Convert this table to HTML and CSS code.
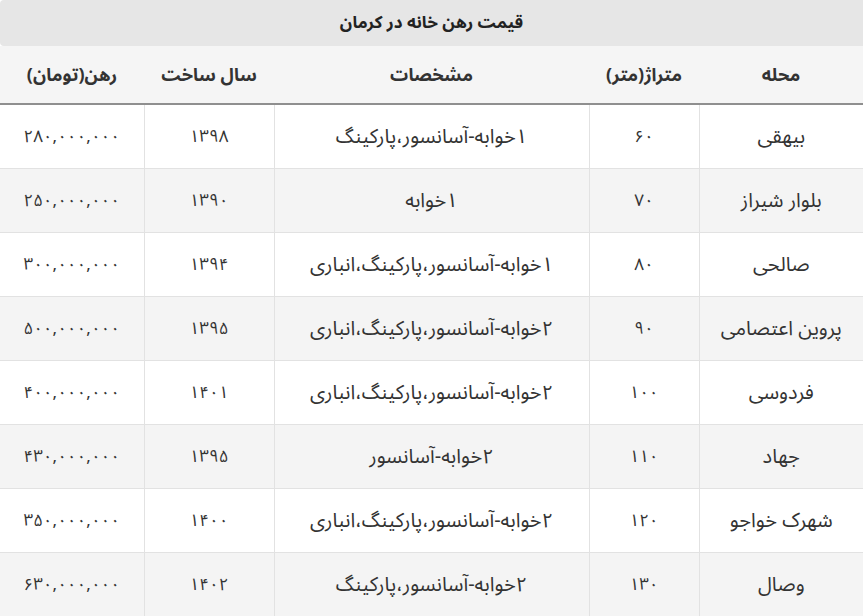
FILE: index.html
```html
<!DOCTYPE html>
<html lang="fa" dir="rtl">
<head>
<meta charset="utf-8">
<title>قیمت رهن خانه در کرمان</title>
<link rel="stylesheet" href="styles.css">
</head>
<body>
<div class="wrap">
  <div class="caption">قیمت رهن خانه در کرمان</div>
  <table class="prices">
    <colgroup>
      <col class="c-area"><col class="c-size"><col class="c-spec"><col class="c-year"><col class="c-price">
    </colgroup>
    <thead>
      <tr><th>محله</th><th>متراژ(متر)</th><th>مشخصات</th><th>سال ساخت</th><th>رهن(تومان)</th></tr>
    </thead>
    <tbody>
      <tr><td>بیهقی</td><td class="num">۶۰</td><td>۱خوابه-آسانسور،پارکینگ</td><td class="num">۱۳۹۸</td><td class="num">۲۸۰,۰۰۰,۰۰۰</td></tr>
      <tr><td>بلوار شیراز</td><td class="num">۷۰</td><td>۱خوابه</td><td class="num">۱۳۹۰</td><td class="num">۲۵۰,۰۰۰,۰۰۰</td></tr>
      <tr><td>صالحی</td><td class="num">۸۰</td><td>۱خوابه-آسانسور،پارکینگ،انباری</td><td class="num">۱۳۹۴</td><td class="num">۳۰۰,۰۰۰,۰۰۰</td></tr>
      <tr><td>پروین اعتصامی</td><td class="num">۹۰</td><td>۲خوابه-آسانسور،پارکینگ،انباری</td><td class="num">۱۳۹۵</td><td class="num">۵۰۰,۰۰۰,۰۰۰</td></tr>
      <tr><td>فردوسی</td><td class="num">۱۰۰</td><td>۲خوابه-آسانسور،پارکینگ،انباری</td><td class="num">۱۴۰۱</td><td class="num">۴۰۰,۰۰۰,۰۰۰</td></tr>
      <tr><td>جهاد</td><td class="num">۱۱۰</td><td>۲خوابه-آسانسور</td><td class="num">۱۳۹۵</td><td class="num">۴۳۰,۰۰۰,۰۰۰</td></tr>
      <tr><td>شهرک خواجو</td><td class="num">۱۲۰</td><td>۲خوابه-آسانسور،پارکینگ،انباری</td><td class="num">۱۴۰۰</td><td class="num">۳۵۰,۰۰۰,۰۰۰</td></tr>
      <tr><td>وصال</td><td class="num">۱۳۰</td><td>۲خوابه-آسانسور،پارکینگ</td><td class="num">۱۴۰۲</td><td class="num">۶۳۰,۰۰۰,۰۰۰</td></tr>
    </tbody>
  </table>
</div>
</body>
</html>
```
FILE: styles.css
```css
html, body {
  margin: 0;
  padding: 0;
  background: #ffffff;
}
body {
  font-family: "Noto Sans Arabic", "DejaVu Sans", sans-serif;
  color: #333333;
}
.wrap {
  width: 863px;
}
.caption {
  height: 46px;
  line-height: 46px;
  background: #e6e6e6;
  text-align: center;
  font-size: 17px;
  font-weight: bold;
  color: #222222;
  border-radius: 4px 0 0 4px;
}
.prices {
  width: 863px;
  border-collapse: collapse;
  table-layout: fixed;
}
.c-area { width: 164px; }
.c-size { width: 110px; }
.c-spec { width: 315px; }
.c-year { width: 130px; }
.c-price { width: 144px; }
.prices th {
  height: 57px;
  background: #f5f5f5;
  font-size: 18px;
  font-weight: bold;
  color: #333333;
  text-align: center;
  border-bottom: 2px solid #8f8f8f;
  padding: 0;
}
.prices td {
  height: 63px;
  padding: 0;
  text-align: center;
  font-size: 20px;
  color: #333333;
  border: 1px solid #e2e2e2;
  border-top: none;
}
.prices td.num {
  font-size: 17px;
}
.prices tbody tr:nth-child(even) td {
  background: #f4f4f4;
}
.prices td:first-child { border-right: none; }
.prices td:last-child { border-left: none; }
```
